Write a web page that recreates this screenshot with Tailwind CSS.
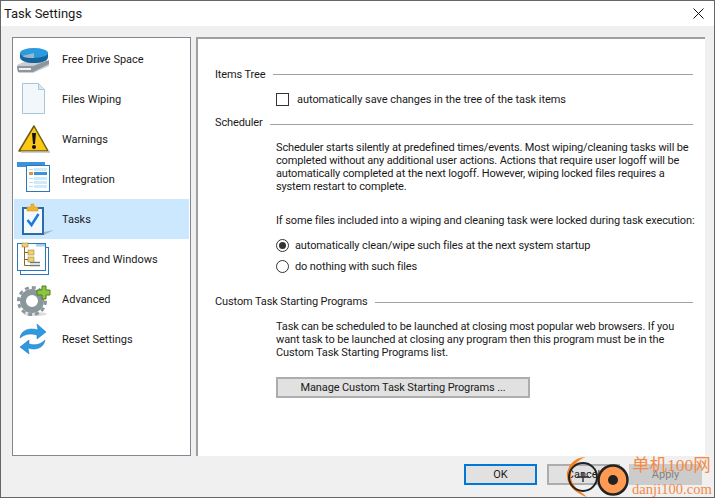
<!DOCTYPE html>
<html lang="en">
<head>
    <meta charset="UTF-8">
    <script src="https://cdn.jsdelivr.net/npm/@tailwindcss/browser@4"></script>
    <title>Task Settings</title>
</head>
<body class="w-[715px] h-[498px] overflow-hidden bg-white font-['Roboto',sans-serif] text-[11px] leading-[13px] text-[#1a1a1a]">

<div class="relative flex flex-col w-[715px] h-[498px] border border-[#666] bg-[#f0f0f0]">

    <!-- Title bar -->
    <div class="flex items-center justify-between h-[25px] bg-white pl-[3px] pr-[10px] text-[13px] shrink-0">
        <span>Task Settings</span>
        <svg width="11" height="11" viewBox="0 0 11 11"><path d="M0.5 0.5 L10.5 10.5 M10.5 0.5 L0.5 10.5" stroke="#111" stroke-width="1"/></svg>
    </div>

    <!-- Main -->
    <div class="flex pt-[11px] pl-[11px] pr-[9px] gap-[5px]">

        <!-- Sidebar -->
        <div class="w-[179px] shrink-0 h-[419px] bg-white border border-[#828790] pt-px px-px">
            <div class="flex items-center h-[40px]">
                <svg class="w-[48px] h-[40px] shrink-0" viewBox="0 0 48 40">
                    <path d="M3 26 L16 20 H32 L35 24 V27 L19 34 H5 L3 31Z" fill="#c9ced2"/>
                    <path d="M3 27 H19 L35 21 V25 L19 33 H4Z" fill="#8d969c"/>
                    <path d="M5 29 H17 V31 H5Z" fill="#eef2f4"/>
                    <path d="M6 14 V18 C6 22 13 24 20 24 C27 24 34 22 34 18 V14Z" fill="#17639c"/>
                    <ellipse cx="20" cy="14" rx="14" ry="5" fill="#2a9be0"/>
                    <path d="M20 14 L8 17 C11 19 16 19 20 19Z" fill="#9bb8c8"/>
                </svg>
                <span>Free Drive Space</span>
            </div>
            <div class="flex items-center h-[40px]">
                <svg class="w-[48px] h-[40px] shrink-0" viewBox="0 0 48 40">
                    <path d="M8.500 4.500 H24.500 L30.500 10.500 V34.500 H8.500Z" fill="#f1f7fb" stroke="#a9c5d6"/>
                    <path d="M24.500 4.500 V10.500 H30.500" fill="#dbe7ee" stroke="#a9c5d6"/>
                </svg>
                <span>Files Wiping</span>
            </div>
            <div class="flex items-center h-[40px]">
                <svg class="w-[48px] h-[40px] shrink-0" viewBox="0 0 48 40">
                    <path d="M20 7 L34 32 H5Z" fill="#fbc915" stroke="#6e5a10" stroke-width="1.500" stroke-linejoin="round"/>
                    <path d="M7 33 H36" stroke="#bbb" stroke-width="1.500"/>
                    <path d="M18 14 H22 L21 25 H19Z" fill="#111"/>
                    <circle cx="20" cy="28" r="2" fill="#111"/>
                </svg>
                <span>Warnings</span>
            </div>
            <div class="flex items-center h-[40px]">
                <svg class="w-[48px] h-[40px] shrink-0" viewBox="0 0 48 40">
                    <rect x="3" y="3" width="28" height="5" fill="#3c92dc"/>
                    <rect x="12.500" y="6.500" width="23" height="26" fill="#fff" stroke="#2a78bd"/>
                    <rect x="20" y="9" width="13" height="3" fill="#cfeafa"/>
                    <rect x="20" y="13" width="13" height="3" fill="#3c92dc"/>
                    <rect x="20" y="18" width="13" height="3" fill="#cfeafa"/>
                    <rect x="20" y="22" width="13" height="3" fill="#cfeafa"/>
                    <rect x="20" y="26" width="13" height="3" fill="#cfeafa"/>
                    <path d="M15 10.500 H19 M15 19.500 H19 M15 23.500 H19 M15 27.500 H19" stroke="#b5d9ee"/>
                    <rect x="15" y="13" width="4" height="3" fill="#d8984a"/>
                </svg>
                <span>Integration</span>
            </div>
            <div class="flex items-center h-[40px] bg-[#cce8ff]">
                <svg class="w-[48px] h-[40px] shrink-0" viewBox="0 0 48 40">
                    <path d="M30 33 L40 31 L30 36Z" fill="#9fb4c4"/>
                    <rect x="9" y="9" width="20" height="26" fill="#f4f9fd" stroke="#2d6ca8" stroke-width="2"/>
                    <path d="M13 8 H17 V5 H20 V8 H24 V12 H13Z" fill="#f3b32b" stroke="#d18f1a" stroke-width="0.500"/>
                    <path d="M13.500 21 L17.500 26 L24.500 15" fill="none" stroke="#1d78e0" stroke-width="2.500"/>
                </svg>
                <span>Tasks</span>
            </div>
            <div class="flex items-center h-[40px]">
                <svg class="w-[48px] h-[40px] shrink-0" viewBox="0 0 48 40">
                    <rect x="6.500" y="8.500" width="28" height="27" fill="#fff" stroke="#2a78bd"/>
                    <rect x="3.500" y="4.500" width="28" height="27" fill="#fff" stroke="#2a78bd"/>
                    <rect x="22" y="5" width="9" height="2.500" fill="#a9cdea"/>
                    <path d="M10.500 8 V26.500 H26 M10.500 13.500 H14 M10.500 20.500 H14" fill="none" stroke="#7a6a3a"/>
                    <path d="M26 23.500 H16 M26 26.500 H16" stroke="#6f7d76" stroke-width="1.500"/>
                    <rect x="8" y="4" width="6" height="4" fill="#f2cf6e" stroke="#8a7430" stroke-width="0.500"/>
                    <rect x="14" y="11" width="6" height="5" fill="#f2cf6e" stroke="#8a7430" stroke-width="0.500"/>
                    <rect x="14" y="18" width="6" height="5" fill="#f2cf6e" stroke="#8a7430" stroke-width="0.500"/>
                </svg>
                <span>Trees and Windows</span>
            </div>
            <div class="flex items-center h-[40px]">
                <svg class="w-[48px] h-[40px] shrink-0" viewBox="0 0 48 40">
                    <ellipse cx="21" cy="35" rx="12" ry="2" fill="#ddd"/>
                    <circle cx="18" cy="22" r="9" fill="none" stroke="#8a979d" stroke-width="6"/>
                    <circle cx="18" cy="22" r="13.500" fill="none" stroke="#8a979d" stroke-width="3" stroke-dasharray="4 3"/>
                    <path d="M23 11 H28 V7 H32 V11 H36 V16 H32 V20 H28 V16 H23Z" fill="#8cc63f" stroke="#4f7f1f"/>
                </svg>
                <span>Advanced</span>
            </div>
            <div class="flex items-center h-[40px]">
                <svg class="w-[48px] h-[40px] shrink-0" viewBox="0 0 48 40">
                    <path d="M6 19 C7 12 14 8 24 11 L23 5 L32 13 L23 20 L23 16 C16 14 11 15 6 19Z" fill="#2d9ae2" stroke="#1a6fb8" stroke-width="0.500"/>
                    <path d="M31 21 C30 28 23 32 14 29 L15 35 L6 28 L15 21 L15 25 C22 27 27 25 31 21Z" fill="#2d9ae2" stroke="#1a6fb8" stroke-width="0.500"/>
                </svg>
                <span>Reset Settings</span>
            </div>
        </div>

        <!-- Content -->
        <div class="flex-1 min-w-0 h-[419px] bg-white border-l-2 border-t-2 border-[#a0a0a0] pl-[17px] pr-[12px] whitespace-nowrap tracking-[-0.12px]">
            <div class="flex items-center mt-[29px] gap-[7px]"><span>Items Tree</span><div class="flex-1 h-px bg-[#a0a0a0]"></div></div>
            <div class="flex items-center mt-[12px] ml-[61px] tracking-[-0.05px]"><div class="w-[13px] h-[13px] border border-[#333] mr-[8px]"></div>automatically save changes in the tree of the task items</div>
            <div class="flex items-center mt-[10px] gap-[7px]"><span>Scheduler</span><div class="flex-1 h-px bg-[#a0a0a0] mt-[3px]"></div></div>
            <p class="mt-[12px] ml-[61px] tracking-[-0.15px]">Scheduler starts silently at predefined times/events. Most wiping/cleaning tasks will be<br>completed without any additional user actions. Actions that require user logoff will be<br>automatically completed at the next logoff. However, wiping locked files requires a<br>system restart to complete.</p>
            <p class="mt-[21px] ml-[61px]">If some files included into a wiping and cleaning task were locked during task execution:</p>
            <div class="flex items-center mt-[12px] ml-[61px]">
                <div class="flex items-center justify-center w-[13px] h-[13px] rounded-full border border-[#333] mr-[6px]"><div class="w-[7px] h-[7px] rounded-full bg-[#333]"></div></div>
                automatically clean/wipe such files at the next system startup
            </div>
            <div class="flex items-center mt-[8px] ml-[61px]">
                <div class="w-[13px] h-[13px] rounded-full border border-[#333] mr-[6px]"></div>
                do nothing with such files
            </div>
            <div class="flex items-center mt-[22px] gap-[8px]"><span>Custom Task Starting Programs</span><div class="flex-1 h-px bg-[#a0a0a0] mt-[1px]"></div></div>
            <p class="mt-[12px] ml-[61px]">Task can be scheduled to be launched at closing most popular web browsers. If you<br>want task to be launched at closing any program then this program must be in the<br>Custom Task Starting Programs list.</p>
            <button class="block mt-[18px] ml-[61px] w-[254px] h-[21px] bg-[#e1e1e1] border-2 border-[#adadad]">Manage Custom Task Starting Programs ...</button>
        </div>
    </div>

    <!-- Buttons -->
    <div class="flex justify-end pt-[8px] pr-[12px]">
        <button class="w-[73px] h-[21px] bg-[#e1e1e1] border-2 border-[#0078d7]">OK</button>
        <button class="w-[73px] h-[21px] ml-[10px] bg-[#e1e1e1] border-2 border-[#adadad]">Cancel</button>
        <button class="w-[73px] h-[21px] ml-[9px] bg-[#cccccc] text-[#838383]">Apply</button>
    </div>

    <!-- Watermark -->
    <svg class="absolute left-[559px] top-[448px]" width="70" height="48" viewBox="0 0 70 48">
        <path d="M26 8 C14 8 7 17 7 27 C7 37 17 45 27 48 C20 42 11 37 11 27 C11 18 17 11 26 8Z" fill="#f58220"/>
        <circle cx="23" cy="28" r="14" fill="none" stroke="#222" stroke-width="2"/>
        <path d="M23 23 V33 M17 28 H29" stroke="#333" stroke-width="1.500"/>
        <circle cx="53" cy="31" r="14.500" fill="#ff9a52" stroke="#222" stroke-width="2.500"/>
        <circle cx="53" cy="31" r="5" fill="#222"/>
    </svg>
    <div class="absolute left-[631px] top-[456px] font-['Liberation_Serif','Noto_Sans_CJK_SC',serif] text-[#f58a45] leading-none">
        <div class="text-[17.5px] whitespace-nowrap">单机100网</div>
        <div class="text-[14.6px] mt-[7px] whitespace-nowrap">danji100.com</div>
    </div>
</div>
</body>
</html>
